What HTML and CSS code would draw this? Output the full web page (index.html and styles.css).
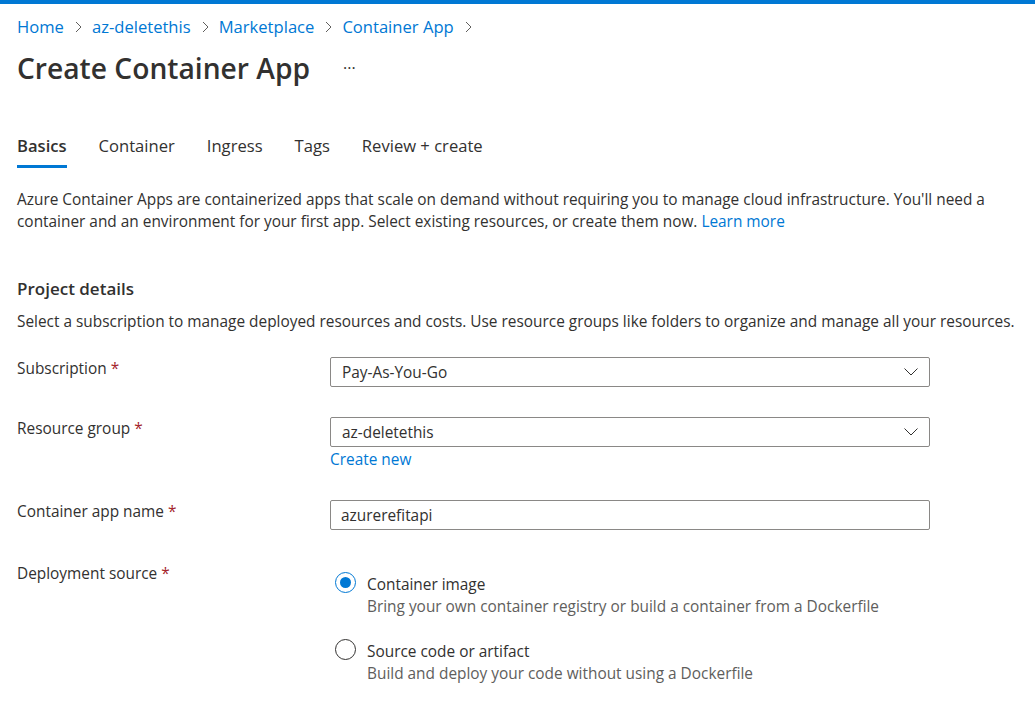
FILE: index.html
```html
<!DOCTYPE html>
<html lang="en">
<head>
<meta charset="utf-8">
<title>Create Container App</title>
<link rel="stylesheet" href="styles.css">
</head>
<body>
<div class="topbar"></div>
<main class="page">
  <nav class="breadcrumb">
    <a class="crumb">Home</a>
    <svg class="sep" width="7" height="12" viewBox="0 0 7 12"><path d="M1 1l5 5-5 5" fill="none" stroke="#605e5c" stroke-width="1"/></svg>
    <a class="crumb">az-deletethis</a>
    <svg class="sep" width="7" height="12" viewBox="0 0 7 12"><path d="M1 1l5 5-5 5" fill="none" stroke="#605e5c" stroke-width="1"/></svg>
    <a class="crumb">Marketplace</a>
    <svg class="sep" width="7" height="12" viewBox="0 0 7 12"><path d="M1 1l5 5-5 5" fill="none" stroke="#605e5c" stroke-width="1"/></svg>
    <a class="crumb">Container App</a>
    <svg class="sep" width="7" height="12" viewBox="0 0 7 12"><path d="M1 1l5 5-5 5" fill="none" stroke="#605e5c" stroke-width="1"/></svg>
  </nav>

  <header class="title-row">
    <h1 class="title">Create Container App</h1>
    <span class="more">···</span>
  </header>

  <div class="tabs">
    <span class="tab active">Basics</span>
    <span class="tab">Container</span>
    <span class="tab">Ingress</span>
    <span class="tab">Tags</span>
    <span class="tab">Review + create</span>
  </div>

  <p class="intro">Azure Container Apps are containerized apps that scale on demand without requiring you to manage cloud infrastructure. You'll need a container and an environment for your first app. Select existing resources, or create them now. <a class="link">Learn more</a></p>

  <h2 class="section">Project details</h2>
  <p class="section-desc">Select a subscription to manage deployed resources and costs. Use resource groups like folders to organize and manage all your resources.</p>

  <div class="form">
    <div class="row row-sub">
      <div class="label">Subscription <span class="req">*</span></div>
      <div class="field">
        <div class="select"><span>Pay-As-You-Go</span>
          <svg class="chev" width="14" height="8" viewBox="0 0 14 8"><path d="M0.5 0.5l6.5 6.5 6.5-6.5" fill="none" stroke="#323130" stroke-width="1"/></svg>
        </div>
      </div>
    </div>

    <div class="row row-rg">
      <div class="label">Resource group <span class="req">*</span></div>
      <div class="field">
        <div class="select"><span>az-deletethis</span>
          <svg class="chev" width="14" height="8" viewBox="0 0 14 8"><path d="M0.5 0.5l6.5 6.5 6.5-6.5" fill="none" stroke="#323130" stroke-width="1"/></svg>
        </div>
        <a class="link create-new">Create new</a>
      </div>
    </div>

    <div class="row row-name">
      <div class="label">Container app name <span class="req">*</span></div>
      <div class="field">
        <div class="textbox">azurerefitapi</div>
      </div>
    </div>

    <div class="row row-src">
      <div class="label">Deployment source <span class="req">*</span></div>
      <div class="field radios">
        <div class="radio">
          <span class="dot checked"></span>
          <div class="radio-text">
            <div class="radio-title">Container image</div>
            <div class="radio-desc">Bring your own container registry or build a container from a Dockerfile</div>
          </div>
        </div>
        <div class="radio">
          <span class="dot"></span>
          <div class="radio-text">
            <div class="radio-title">Source code or artifact</div>
            <div class="radio-desc">Build and deploy your code without using a Dockerfile</div>
          </div>
        </div>
      </div>
    </div>
  </div>
</main>
</body>
</html>
```

FILE: styles.css
```css
* { box-sizing: border-box; }
html, body { margin: 0; padding: 0; background: #ffffff; }
body {
  font-family: "Open Sans", "Noto Sans", "Liberation Sans", sans-serif;
  color: #323130;
  font-size: 15.4px;
  width: 1035px;
  height: 713px;
  overflow: hidden;
}
.topbar { height: 4px; background: #0078d4; }
.page { padding: 0 0 0 17px; }

.breadcrumb {
  display: flex;
  align-items: center;
  height: 24px;
  margin-top: 11px;
  font-size: 16.6px;
  line-height: 24px;
}
.crumb { color: #0078d4; }
.sep { margin: 0 10px 0 11px; }

.title-row {
  display: flex;
  align-items: center;
  margin-top: 11px;
  height: 36px;
}
.title {
  margin: 0;
  font-size: 28.2px;
  font-weight: 600;
  line-height: 36px;
  color: #323130;
}
.more {
  margin-left: 33px;
  font-size: 16px;
  color: #323130;
  line-height: 36px;
}

.tabs {
  display: flex;
  margin-top: 48px;
  font-size: 16.6px;
  line-height: 24px;
}
.tab {
  margin-right: 32px;
  border-bottom: 3px solid transparent;
  height: 24px;
  box-sizing: content-box;
  padding-bottom: 7px;
}
.tab.active {
  border-bottom-color: #0078d4;
  font-weight: 600;
}

.intro {
  margin: 21px 0 0 0;
  line-height: 22px;
  width: 1000px;
}
.link { color: #0078d4; }

.section {
  margin: 44px 0 0 0;
  font-size: 17px;
  font-weight: 600;
  line-height: 24px;
}
.section-desc {
  margin: 10px 0 0 0;
  line-height: 22px;
  white-space: nowrap;
}

.form { margin-top: 24px; }
.row { display: flex; }
.label {
  width: 313px;
  flex: none;
  line-height: 22px;
  padding-top: 1px;
}
.req { color: #a4262c; }
.field { width: 600px; flex: none; }

.select, .textbox {
  height: 30px;
  border: 1px solid #8a8886;
  border-radius: 2px;
  display: flex;
  align-items: center;
  padding: 0 11px;
  color: #323130;
}
.select { justify-content: space-between; }

.row-rg { margin-top: 30px; }
.create-new {
  display: block;
  margin-top: 2px;
  line-height: 22px;
}
.row-name { margin-top: 29px; }
.textbox { padding-left: 10px; }
.row-src { margin-top: 32px; }

.radios { padding-top: 12px; padding-left: 5px; }
.radio { display: flex; }
.radio + .radio { margin-top: 23px; }
.dot {
  width: 21px;
  height: 21px;
  flex: none;
  border: 1px solid #323130;
  border-radius: 50%;
  margin-top: -2px;
  margin-right: 11px;
  position: relative;
  background: #fff;
}
.dot.checked { border-color: #0078d4; }
.dot.checked::after {
  content: "";
  position: absolute;
  left: 4px; top: 4px;
  width: 11px; height: 11px;
  border-radius: 50%;
  background: #0078d4;
}
.radio-title { line-height: 22px; }
.radio-desc { line-height: 22px; color: #605e5c; }
```
